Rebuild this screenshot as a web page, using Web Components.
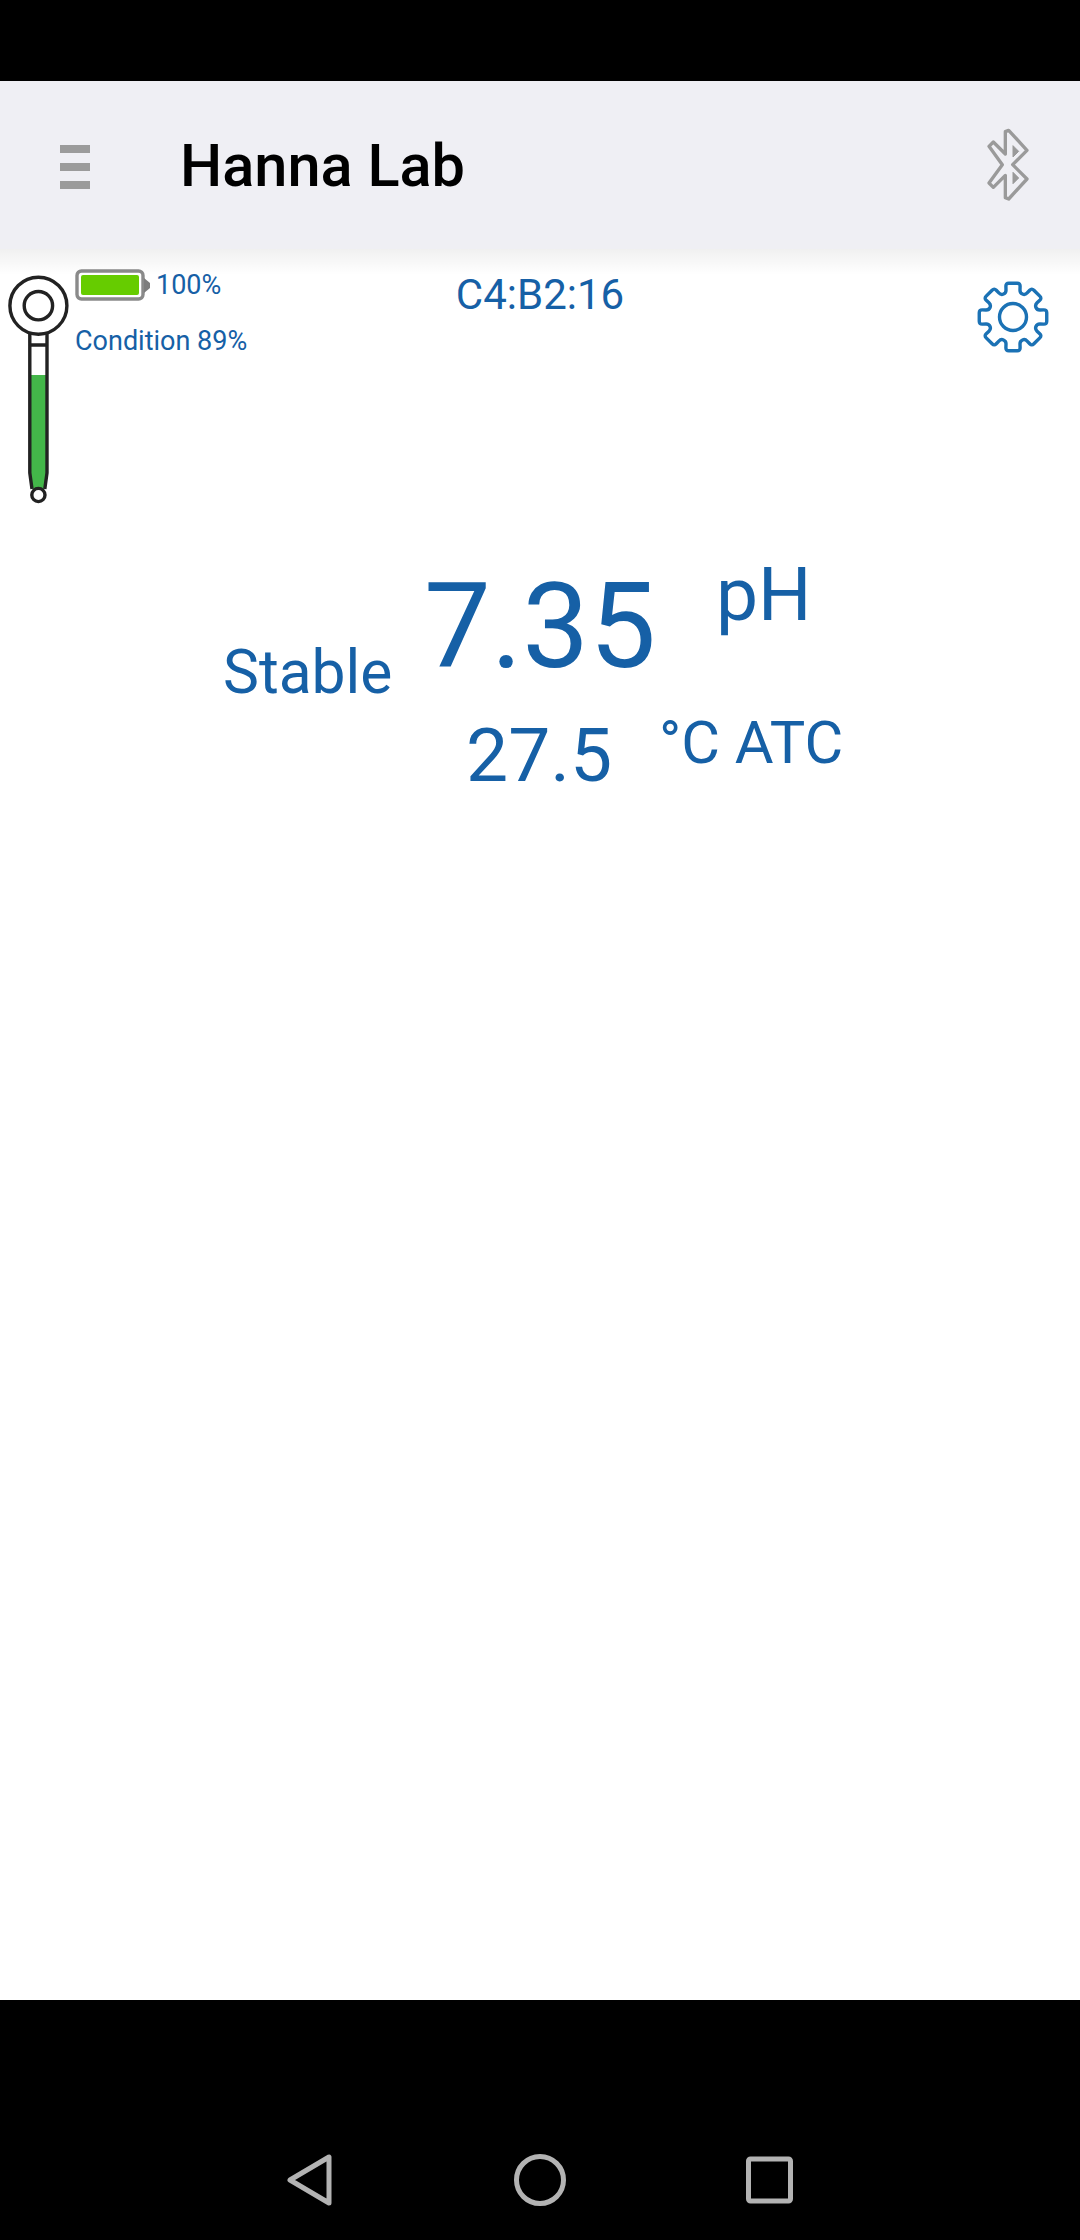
<!DOCTYPE html>
<html>
<head>
<meta charset="utf-8">
<title>Hanna Lab</title>
<style>
  html, body { margin: 0; padding: 0; background: #000; }
  body { font-family: Roboto, "Liberation Sans", sans-serif; }
</style>
</head>
<body>
<meter-screen>
  <app-header slot="header">Hanna Lab</app-header>
  <probe-status slot="status" battery="100%" condition="Condition 89%" mac="C4:B2:16"></probe-status>
  <ph-reading slot="reading" state="Stable" value="7.35" unit="pH" temp="27.5" temp-unit="°C ATC"></ph-reading>
</meter-screen>

<script>
class MeterScreen extends HTMLElement {
  constructor() {
    super();
    this.attachShadow({ mode: 'open' });
    this.shadowRoot.innerHTML = `
      <style>
        :host {
          display: flex;
          flex-direction: column;
          width: 1080px;
          height: 2240px;
          background: #000;
        }
        .top { height: 81px; flex: none; }
        .content {
          height: 1919px;
          flex: none;
          background: #fff;
          display: flex;
          flex-direction: column;
        }
      </style>
      <div class="top"></div>
      <div class="content">
        <slot name="header"></slot>
        <slot name="status"></slot>
        <slot name="reading"></slot>
      </div>
      <nav-bar></nav-bar>
    `;
  }
}

class AppHeader extends HTMLElement {
  constructor() {
    super();
    this.attachShadow({ mode: 'open' });
    this.shadowRoot.innerHTML = `
      <style>
        :host {
          display: flex;
          align-items: center;
          height: 168px;
          flex: none;
          background: #efeff4;
          position: relative;
          color: #000;
          font: 500 59.5px/1 Roboto, sans-serif;
        }
        /* soft shadow under the bar */
        :host::after {
          content: '';
          position: absolute;
          left: 0;
          right: 0;
          top: 100%;
          height: 26px;
          background: linear-gradient(rgba(0, 0, 0, 0.06), rgba(0, 0, 0, 0));
        }
        .menu {
          display: flex;
          flex-direction: column;
          gap: 10px;
          width: 30px;
          margin-left: 60px;
          margin-top: 4px;
        }
        .menu i { display: block; height: 8px; background: #9b9b9b; }
        .title { margin-left: 90px; margin-top: 4px; flex: 1; }
        svg { margin-right: 50px; display: block; }
      </style>
      <div class="menu"><i></i><i></i><i></i></div>
      <div class="title"><slot></slot></div>
      <svg width="44" height="74" viewBox="168 55 132 222" fill="none" stroke="#9a9a9a" stroke-width="10" stroke-linejoin="round">
        <path d="M177 110 L190 97 L226 133 L226 66 L236 62 L291 122 L248 165 L291 208 L236 268 L226 264 L226 197 L190 233 L177 220 L217 165 Z"/>
        <path d="M249 108 L266 125 L249 142 Z M249 188 L266 205 L249 222 Z" fill="#9a9a9a" stroke-width="3"/>
      </svg>
    `;
  }
}

class ProbeIcon extends HTMLElement {
  constructor() {
    super();
    this.attachShadow({ mode: 'open' });
    this.shadowRoot.innerHTML = `
      <style>
        :host { display: block; width: 70px; height: 241px; flex: none; }
        svg { display: block; }
      </style>
      <svg width="70" height="241" viewBox="0 269 70 241" fill="none" stroke="#222" stroke-width="3.4">
        <path d="M30 375 H47 V472 L44 490 H33 L30 472 Z" fill="#43b649" stroke="none"/>
        <circle cx="38.4" cy="305.7" r="28.5" fill="#fff"/>
        <circle cx="38.4" cy="305.7" r="14.2"/>
        <path d="M29.8 334 V473 L32 489 M47 334 V473 L44.8 489 M29.8 345 H47"/>
        <circle cx="38.4" cy="495" r="6.6" fill="#fff"/>
      </svg>
    `;
  }
}

class BatteryIcon extends HTMLElement {
  constructor() {
    super();
    this.attachShadow({ mode: 'open' });
    this.shadowRoot.innerHTML = `
      <style>
        :host { display: block; width: 75px; height: 32px; flex: none; }
        svg { display: block; }
      </style>
      <svg width="75" height="32" viewBox="0 0 75 32">
        <rect x="2" y="2" width="66" height="28" rx="4.5" fill="#fff" stroke="#8a8a8a" stroke-width="3.4"/>
        <rect x="6" y="6" width="58" height="20" rx="2" fill="#66cc00"/>
        <path d="M69 9 L75 14 V19 L69 24 Z" fill="#7d7d7d"/>
      </svg>
    `;
  }
}

class GearIcon extends HTMLElement {
  constructor() {
    super();
    this.attachShadow({ mode: 'open' });
    // eight teeth, one pointing straight up
    const pts = [];
    for (let i = 0; i < 8; i++) {
      const a = i * Math.PI / 4 - Math.PI / 2;
      [[25, -0.28], [34.5, -0.21], [34.5, 0.21], [25, 0.28]].forEach(([r, d]) => {
        pts.push([40 + r * Math.cos(a + d), 40 + r * Math.sin(a + d)]);
      });
    }
    // round every corner of the outline with a small curve
    const toward = (p, q, dist) => {
      const len = Math.hypot(q[0] - p[0], q[1] - p[1]);
      const t = Math.min(dist / len, 0.5);
      return (p[0] + (q[0] - p[0]) * t).toFixed(2) + ' ' + (p[1] + (q[1] - p[1]) * t).toFixed(2);
    };
    let d = '';
    pts.forEach((p, i) => {
      const prev = pts[(i + pts.length - 1) % pts.length];
      const next = pts[(i + 1) % pts.length];
      d += (i ? 'L' : 'M') + toward(p, prev, 3) + ' Q' + p[0].toFixed(2) + ' ' + p[1].toFixed(2) + ' ' + toward(p, next, 3) + ' ';
    });
    this.shadowRoot.innerHTML = `
      <style>
        :host { display: block; width: 80px; height: 80px; }
        svg { display: block; }
      </style>
      <svg width="80" height="80" viewBox="0 0 80 80" fill="none" stroke="#1b72b5" stroke-width="3.4" stroke-linejoin="round">
        <path d="${d}Z"/>
        <circle cx="40" cy="40" r="13.5"/>
      </svg>
    `;
  }
}

class ProbeStatus extends HTMLElement {
  constructor() {
    super();
    this.attachShadow({ mode: 'open' });
    this.shadowRoot.innerHTML = `
      <style>
        :host {
          display: grid;
          grid-template-columns: 1fr auto 1fr;
          align-items: start;
          padding-top: 20px;
          color: #1660a6;
          font: 400 27px/1 Roboto, sans-serif;
        }
        .left { display: flex; gap: 5px; }
        .battery { display: flex; align-items: center; gap: 6px; }
        .condition { margin-top: 27px; }
        .mac { font-size: 42px; margin-top: 5px; }
        gear-icon { justify-self: end; margin: 8px 27px 0 0; }
      </style>
      <div class="left">
        <probe-icon></probe-icon>
        <div>
          <div class="battery"><battery-icon></battery-icon><span>${this.getAttribute('battery')}</span></div>
          <div class="condition">${this.getAttribute('condition')}</div>
        </div>
      </div>
      <div class="mac">${this.getAttribute('mac')}</div>
      <gear-icon></gear-icon>
    `;
  }
}

class PhReading extends HTMLElement {
  constructor() {
    super();
    this.attachShadow({ mode: 'open' });
    this.shadowRoot.innerHTML = `
      <style>
        :host {
          display: block;
          margin-top: 47px;
          padding-left: 223px;
          color: #1660a6;
          font: 400 60.5px/1 Roboto, sans-serif;
        }
        .main { display: flex; align-items: flex-start; }
        .state { margin-top: 86px; width: 201px; }
        .value { font-size: 119px; margin-top: 10px; width: 292px; }
        .unit { font-size: 75px; }
        .sub { display: flex; align-items: flex-start; margin-top: 10px; padding-left: 243px; }
        .temp { font-size: 75px; margin-top: 4px; width: 193px; }
        .temp-unit { font-size: 59.5px; }
      </style>
      <div class="main">
        <div class="state">${this.getAttribute('state')}</div>
        <div class="value">${this.getAttribute('value')}</div>
        <div class="unit">${this.getAttribute('unit')}</div>
      </div>
      <div class="sub">
        <div class="temp">${this.getAttribute('temp')}</div>
        <div class="temp-unit">${this.getAttribute('temp-unit')}</div>
      </div>
    `;
  }
}

class NavBar extends HTMLElement {
  constructor() {
    super();
    this.attachShadow({ mode: 'open' });
    this.shadowRoot.innerHTML = `
      <style>
        :host {
          display: flex;
          justify-content: center;
          align-items: center;
          gap: 170px;
          height: 120px;
          padding-top: 120px;
          flex: none;
        }
        svg { display: block; }
      </style>
      <svg width="60" height="60" viewBox="0 0 60 60" fill="none" stroke="#b3b3b3" stroke-width="5" stroke-linejoin="round">
        <path d="M10 30 L49 7 V53 Z"/>
      </svg>
      <svg width="60" height="60" viewBox="0 0 60 60" fill="none" stroke="#b3b3b3" stroke-width="5">
        <circle cx="30" cy="30" r="23.5"/>
      </svg>
      <svg width="60" height="60" viewBox="0 0 60 60" fill="none" stroke="#b3b3b3" stroke-width="5" stroke-linejoin="round">
        <rect x="8.5" y="9" width="42" height="42" rx="2"/>
      </svg>
    `;
  }
}

customElements.define('probe-icon', ProbeIcon);
customElements.define('battery-icon', BatteryIcon);
customElements.define('gear-icon', GearIcon);
customElements.define('nav-bar', NavBar);
customElements.define('app-header', AppHeader);
customElements.define('probe-status', ProbeStatus);
customElements.define('ph-reading', PhReading);
customElements.define('meter-screen', MeterScreen);
</script>
</body>
</html>
